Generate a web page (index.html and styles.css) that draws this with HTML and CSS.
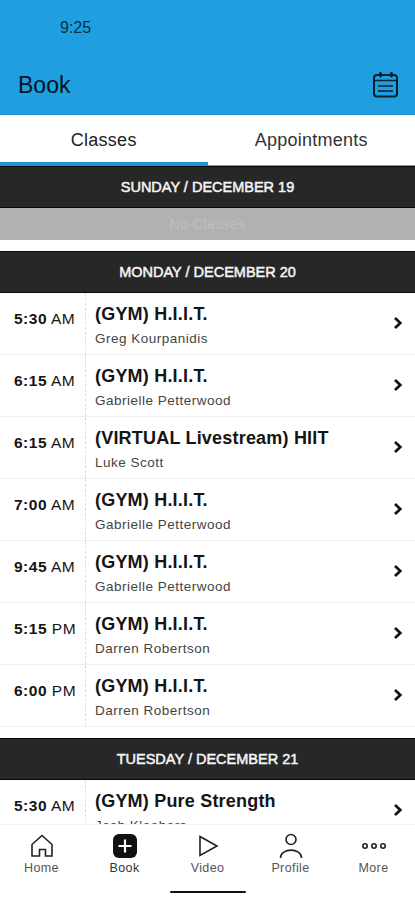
FILE: index.html
```
<!DOCTYPE html>
<html lang="en">
<head>
    <meta charset="UTF-8">
    <title>Book</title>
    <link rel="stylesheet" href="styles.css">
</head>
<body>
<div class="app">
    <header class="header">
        <div class="clock">9:25</div>
        <div class="title-bar">
            <h1>Book</h1>
            <svg class="calendar" width="27" height="27" viewBox="0 0 27 27" fill="none" stroke="#06202e" stroke-width="2">
                <rect x="2" y="4" width="23" height="21.5" rx="3"/>
                <path d="M2 9.5H25M6 15H21M6 20H21" stroke-width="1.6"/>
                <path d="M8.5 2.5V5M19.5 2.5V5" stroke-width="2.8" stroke-linecap="round"/>
            </svg>
        </div>
    </header>
    <nav class="tabs">
        <span class="tab active">Classes</span>
        <span class="tab">Appointments</span>
    </nav>
    <main class="schedule">
        <h2 class="day">SUNDAY / DECEMBER 19</h2>
        <div class="empty">No Classes</div>
        <div class="spacer"></div>
        <h2 class="day">MONDAY / DECEMBER 20</h2>
        <div class="row">
            <div class="time"><b>5:30</b> AM</div>
            <div class="info"><h3>(GYM) H.I.I.T.</h3><p>Greg Kourpanidis</p></div>
            <svg class="arrow" width="10" height="14" viewBox="0 0 10 14"><path d="M2 2L7.3 7L2 12"/></svg>
        </div>
        <div class="row">
            <div class="time"><b>6:15</b> AM</div>
            <div class="info"><h3>(GYM) H.I.I.T.</h3><p>Gabrielle Petterwood</p></div>
            <svg class="arrow" width="10" height="14" viewBox="0 0 10 14"><path d="M2 2L7.3 7L2 12"/></svg>
        </div>
        <div class="row">
            <div class="time"><b>6:15</b> AM</div>
            <div class="info"><h3>(VIRTUAL Livestream) HIIT</h3><p>Luke Scott</p></div>
            <svg class="arrow" width="10" height="14" viewBox="0 0 10 14"><path d="M2 2L7.3 7L2 12"/></svg>
        </div>
        <div class="row">
            <div class="time"><b>7:00</b> AM</div>
            <div class="info"><h3>(GYM) H.I.I.T.</h3><p>Gabrielle Petterwood</p></div>
            <svg class="arrow" width="10" height="14" viewBox="0 0 10 14"><path d="M2 2L7.3 7L2 12"/></svg>
        </div>
        <div class="row">
            <div class="time"><b>9:45</b> AM</div>
            <div class="info"><h3>(GYM) H.I.I.T.</h3><p>Gabrielle Petterwood</p></div>
            <svg class="arrow" width="10" height="14" viewBox="0 0 10 14"><path d="M2 2L7.3 7L2 12"/></svg>
        </div>
        <div class="row">
            <div class="time"><b>5:15</b> PM</div>
            <div class="info"><h3>(GYM) H.I.I.T.</h3><p>Darren Robertson</p></div>
            <svg class="arrow" width="10" height="14" viewBox="0 0 10 14"><path d="M2 2L7.3 7L2 12"/></svg>
        </div>
        <div class="row">
            <div class="time"><b>6:00</b> PM</div>
            <div class="info"><h3>(GYM) H.I.I.T.</h3><p>Darren Robertson</p></div>
            <svg class="arrow" width="10" height="14" viewBox="0 0 10 14"><path d="M2 2L7.3 7L2 12"/></svg>
        </div>
        <div class="spacer"></div>
        <h2 class="day">TUESDAY / DECEMBER 21</h2>
        <div class="row">
            <div class="time"><b>5:30</b> AM</div>
            <div class="info"><h3>(GYM) Pure Strength</h3><p>Josh Kleebers</p></div>
            <svg class="arrow" width="10" height="14" viewBox="0 0 10 14"><path d="M2 2L7.3 7L2 12"/></svg>
        </div>
    </main>
    <footer class="bottom">
        <nav class="menu">
            <a class="menu-item">
                <svg width="26" height="26" viewBox="0 0 26 26"><path d="M3 11.5L13 2.5L23 11.5V23H16.5V16.5H10.5V23H3Z"/></svg>
                <span>Home</span>
            </a>
            <a class="menu-item active">
                <svg width="26" height="26" viewBox="0 0 26 26"><rect x="1" y="1" width="24" height="24" rx="6" fill="#111" stroke="none"/><path d="M13 6.5V19.5M6.5 13H19.5" stroke="#fff" stroke-width="2.2"/></svg>
                <span>Book</span>
            </a>
            <a class="menu-item">
                <svg width="26" height="26" viewBox="0 0 26 26"><path d="M5 3.5L22 13L5 22.5Z"/></svg>
                <span>Video</span>
            </a>
            <a class="menu-item">
                <svg width="26" height="26" viewBox="0 0 26 26"><circle cx="13" cy="6.5" r="5"/><path d="M2.5 25C2.5 14.5 23.5 14.5 23.5 25"/></svg>
                <span>Profile</span>
            </a>
            <a class="menu-item">
                <svg width="26" height="26" viewBox="0 0 26 26"><circle cx="4" cy="13" r="2.2"/><circle cx="13" cy="13" r="2.2"/><circle cx="22" cy="13" r="2.2"/></svg>
                <span>More</span>
            </a>
        </nav>
        <div class="home-bar"></div>
    </footer>
</div>
</body>
</html>
```
FILE: styles.css
```
html,body{
    margin:0;
    padding:0;
    height:100%;
}
body{
    font-family:"Liberation Sans",Arial,sans-serif;
    color:#151515;
    background-color:#fff;
    overflow:hidden;
}
h1,h2,h3,p{
    margin:0;
    font-weight:normal;
}
.app{
    height:900px;
    display:flex;
    flex-direction:column;
}
.header{
    height:115px;
    flex:none;
    box-sizing:border-box;
    background-color:#1f9fdf;
    border-bottom:1px solid #198dc8;
}
.clock{
    padding:18px 0 0 60px;
    font-size:16px;
    line-height:20px;
    color:#063047;
}
.title-bar{
    display:flex;
    justify-content:space-between;
    padding:33px 16px 0 18px;
}
.title-bar h1{
    font-size:23px;
    line-height:28px;
    color:#04131c;
}
.tabs{
    height:51px;
    flex:none;
    display:flex;
}
.tab{
    flex:1;
    box-sizing:border-box;
    text-align:center;
    font-size:18px;
    line-height:51px;
    letter-spacing:.25px;
    border-bottom:1px solid #999;
    color:#333;
}
.tab.active{
    border-bottom:4px solid #1f94cf;
    color:#222;
}
.schedule{
    flex:1;
    min-height:0;
    overflow:hidden;
}
.day{
    height:42px;
    box-sizing:border-box;
    border:solid #080808;
    border-width:1px 0;
    background-color:#272727;
    color:#f5f5f5;
    text-align:center;
    font-size:14.5px;
    line-height:40px;
    -webkit-text-stroke:.5px #f5f5f5;
}
.empty{
    height:32px;
    background-color:#b1b1b1;
    color:#bfbfbf;
    text-align:center;
    font-size:14px;
    line-height:32px;
    letter-spacing:.4px;
}
.spacer{
    height:11px;
}
.row{
    height:62px;
    box-sizing:border-box;
    display:flex;
    border-bottom:1px solid #efefef;
}
.time{
    width:86px;
    box-sizing:border-box;
    padding:16px 0 0 14px;
    border-right:1px dashed #ddd;
    font-size:15.5px;
    line-height:20px;
    letter-spacing:.5px;
    white-space:nowrap;
}
.info{
    flex:1;
    padding:10px 0 0 9px;
}
.info h3{
    font-size:18px;
    font-weight:bold;
    line-height:22px;
    letter-spacing:.2px;
}
.info p{
    margin-top:6px;
    font-size:13.5px;
    line-height:16px;
    letter-spacing:.5px;
    color:#444;
}
.arrow{
    margin:23px 12px 0 0;
    fill:none;
    stroke:#111;
    stroke-width:2.7;
}
.bottom{
    height:76px;
    flex:none;
    box-sizing:border-box;
    border-top:1px solid #f3f3f3;
    background-color:#fff;
}
.menu{
    display:flex;
    padding-top:8px;
}
.menu-item{
    flex:1;
    display:flex;
    flex-direction:column;
    align-items:center;
    font-size:12.5px;
    line-height:16px;
    letter-spacing:.4px;
    color:#555;
}
.menu-item svg{
    fill:none;
    stroke:#222;
    stroke-width:1.6;
    margin-bottom:1px;
}
.menu-item.active{
    color:#333;
}
.home-bar{
    width:76px;
    height:2px;
    margin:15px auto 0;
    border-radius:1px;
    background-color:#111;
}
```
